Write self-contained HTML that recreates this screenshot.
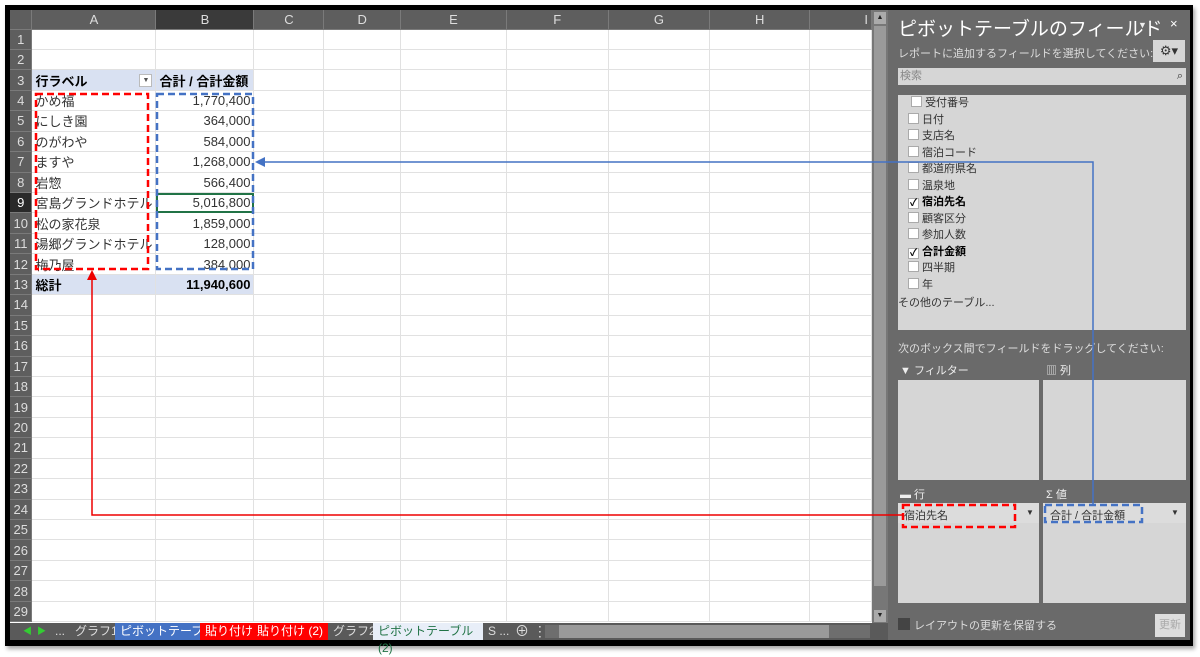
<!DOCTYPE html><html><head><meta charset="utf-8"><style>
*{margin:0;padding:0;box-sizing:border-box}
body{width:1200px;height:650px;background:#fff;position:relative;overflow:hidden;font-family:"Liberation Sans","Noto Sans CJK JP",sans-serif}
.abs{position:absolute}
#frame{left:5px;top:5px;width:1188px;height:641px;background:#000;box-shadow:2px 3px 4px rgba(0,0,0,.35)}
#grid{left:10px;top:10px;width:862px;height:613px;background:#fff;overflow:hidden}
table{border-collapse:collapse;table-layout:fixed;font-size:13px}
td{border-right:1px solid #e1e1e1;border-bottom:1px solid #e1e1e1;height:20.45px;padding:0 3px;white-space:nowrap;overflow:hidden;color:#333}
td.rh{background:#5e5e5e;color:#ddd;text-align:center;border-color:#7a7a7a;font-size:13px;padding:0}
tr.ch td{background:#5e5e5e;color:#ddd;text-align:center;border-color:#7a7a7a;height:19px}
.r{text-align:right}
.hd{background:#d9e1f2;font-weight:bold;color:#000}
#panel{left:888px;top:10px;width:302px;height:630px;background:#6a6a6a;color:#eee}
.lg{background:#d6d6d6}
.it{position:absolute;left:10px;font-size:11px;color:#333;height:16px;line-height:16px}
.cb{display:inline-block;width:11px;height:11px;background:#fff;border:1px solid #aaa;vertical-align:-1px;margin-right:3px;font-size:10px;line-height:9px;text-align:center}
.tab{position:absolute;top:0;height:17px;line-height:17px;font-size:12px;color:#ddd;padding:0 5px}
</style></head><body>
<div id="frame" class="abs"></div>
<div id="grid" class="abs">
<table>
<colgroup><col style="width:22px"><col style="width:123px"><col style="width:98px"><col style="width:70px"><col style="width:77px"><col style="width:106px"><col style="width:102px"><col style="width:102px"><col style="width:100px"><col style="width:62px"></colgroup>
<tr class="ch"><td style="background:#5e5e5e"></td><td>A</td><td style="background:#3a3a3a">B</td><td>C</td><td>D</td><td>E</td><td>F</td><td>G</td><td>H</td><td style="text-align:right">I</td></tr>
<tr><td class="rh">1</td><td></td><td></td><td></td><td></td><td></td><td></td><td></td><td></td><td></td></tr>
<tr><td class="rh">2</td><td></td><td></td><td></td><td></td><td></td><td></td><td></td><td></td><td></td></tr>
<tr><td class="rh">3</td><td class="hd">行ラベル<span style="float:right;background:#fff;border:1px solid #bbb;width:13px;height:13px;margin-top:3px;font-size:7px;text-align:center;line-height:12px;color:#555">▼</span></td><td class="hd">合計 / 合計金額</td><td></td><td></td><td></td><td></td><td></td><td></td><td></td></tr>
<tr><td class="rh">4</td><td>かめ福</td><td class="r">1,770,400</td><td></td><td></td><td></td><td></td><td></td><td></td><td></td></tr>
<tr><td class="rh">5</td><td>にしき園</td><td class="r">364,000</td><td></td><td></td><td></td><td></td><td></td><td></td><td></td></tr>
<tr><td class="rh">6</td><td>のがわや</td><td class="r">584,000</td><td></td><td></td><td></td><td></td><td></td><td></td><td></td></tr>
<tr><td class="rh">7</td><td>ますや</td><td class="r">1,268,000</td><td></td><td></td><td></td><td></td><td></td><td></td><td></td></tr>
<tr><td class="rh">8</td><td>岩惣</td><td class="r">566,400</td><td></td><td></td><td></td><td></td><td></td><td></td><td></td></tr>
<tr><td class="rh" style="background:#2a2a2a;color:#fff">9</td><td>宮島グランドホテル</td><td class="r" style="outline:2px solid #217346;outline-offset:-2px">5,016,800</td><td></td><td></td><td></td><td></td><td></td><td></td><td></td></tr>
<tr><td class="rh">10</td><td>松の家花泉</td><td class="r">1,859,000</td><td></td><td></td><td></td><td></td><td></td><td></td><td></td></tr>
<tr><td class="rh">11</td><td>湯郷グランドホテル</td><td class="r">128,000</td><td></td><td></td><td></td><td></td><td></td><td></td><td></td></tr>
<tr><td class="rh">12</td><td>梅乃屋</td><td class="r">384,000</td><td></td><td></td><td></td><td></td><td></td><td></td><td></td></tr>
<tr><td class="rh">13</td><td class="hd">総計</td><td class="hd r">11,940,600</td><td></td><td></td><td></td><td></td><td></td><td></td><td></td></tr>
<tr><td class="rh">14</td><td></td><td></td><td></td><td></td><td></td><td></td><td></td><td></td><td></td></tr>
<tr><td class="rh">15</td><td></td><td></td><td></td><td></td><td></td><td></td><td></td><td></td><td></td></tr>
<tr><td class="rh">16</td><td></td><td></td><td></td><td></td><td></td><td></td><td></td><td></td><td></td></tr>
<tr><td class="rh">17</td><td></td><td></td><td></td><td></td><td></td><td></td><td></td><td></td><td></td></tr>
<tr><td class="rh">18</td><td></td><td></td><td></td><td></td><td></td><td></td><td></td><td></td><td></td></tr>
<tr><td class="rh">19</td><td></td><td></td><td></td><td></td><td></td><td></td><td></td><td></td><td></td></tr>
<tr><td class="rh">20</td><td></td><td></td><td></td><td></td><td></td><td></td><td></td><td></td><td></td></tr>
<tr><td class="rh">21</td><td></td><td></td><td></td><td></td><td></td><td></td><td></td><td></td><td></td></tr>
<tr><td class="rh">22</td><td></td><td></td><td></td><td></td><td></td><td></td><td></td><td></td><td></td></tr>
<tr><td class="rh">23</td><td></td><td></td><td></td><td></td><td></td><td></td><td></td><td></td><td></td></tr>
<tr><td class="rh">24</td><td></td><td></td><td></td><td></td><td></td><td></td><td></td><td></td><td></td></tr>
<tr><td class="rh">25</td><td></td><td></td><td></td><td></td><td></td><td></td><td></td><td></td><td></td></tr>
<tr><td class="rh">26</td><td></td><td></td><td></td><td></td><td></td><td></td><td></td><td></td><td></td></tr>
<tr><td class="rh">27</td><td></td><td></td><td></td><td></td><td></td><td></td><td></td><td></td><td></td></tr>
<tr><td class="rh">28</td><td></td><td></td><td></td><td></td><td></td><td></td><td></td><td></td><td></td></tr>
<tr><td class="rh">29</td><td></td><td></td><td></td><td></td><td></td><td></td><td></td><td></td><td></td></tr>
</table>
</div>
<!-- vertical scrollbar -->
<div class="abs" style="left:872px;top:10px;width:16px;height:613px;background:#777"></div>
<div class="abs" style="left:874px;top:12px;width:12px;height:12px;background:#aaa;font-size:7px;text-align:center;line-height:12px;color:#222">▲</div>
<div class="abs" style="left:874px;top:26px;width:12px;height:560px;background:#9a9a9a"></div>
<div class="abs" style="left:874px;top:610px;width:12px;height:12px;background:#aaa;font-size:7px;text-align:center;line-height:12px;color:#222">▼</div>
<!-- tab bar -->
<div class="abs" style="left:10px;top:623px;width:878px;height:17px;background:#5a5a5a">
<span class="tab" style="left:8px;color:#3c3;font-size:9px">◀ &nbsp;▶</span>
<span class="tab" style="left:40px">...</span>
<span class="tab" style="left:60px">グラフ1</span>
<span class="tab" style="left:105px;background:#4472c4;color:#fff">ピボットテーブル</span>
<span class="tab" style="left:190px;background:#f00;color:#fff">貼り付け</span>
<span class="tab" style="left:242px;background:#f00;color:#fff">貼り付け (2)</span>
<span class="tab" style="left:318px">グラフ2</span>
<span class="tab" style="left:363px;background:#e8eef8;color:#217346;width:110px">ピボットテーブル (2)</span>
<span class="tab" style="left:473px">S ...</span>
<span class="tab" style="left:500px;font-size:14px">⊕ ⋮</span>
<div class="abs" style="left:535px;top:2px;width:325px;height:13px;background:#6e6e6e"></div>
<div class="abs" style="left:549px;top:2px;width:270px;height:13px;background:#9a9a9a"></div>
</div>
<!-- panel -->
<div id="panel" class="abs">
<div class="abs" style="left:10px;top:4px;font-size:19px;color:#fff">ピボットテーブルのフィールド</div>
<div class="abs" style="left:250px;top:10px;font-size:9px">▼</div>
<div class="abs" style="left:282px;top:6px;font-size:13px;color:#fff">×</div>
<div class="abs" style="left:10px;top:35px;font-size:11px;color:#ddd">レポートに追加するフィールドを選択してください:</div>
<div class="abs lg" style="left:265px;top:30px;width:32px;height:22px;font-size:13px;color:#333;text-align:center;line-height:22px">⚙▾</div>
<div class="abs lg" style="left:10px;top:58px;width:288px;height:17px;font-size:11px;color:#888;padding-left:2px;line-height:17px">検索<span style="float:right;color:#333;margin-right:3px">⌕</span></div>
<div class="abs lg" style="left:10px;top:85px;width:288px;height:235px">
<div class="it" style="top:0">&nbsp;<span class="cb"></span>受付番号</div>
<div class="it" style="top:16.5px"><span class="cb"></span>日付</div>
<div class="it" style="top:33px"><span class="cb"></span>支店名</div>
<div class="it" style="top:49.5px"><span class="cb"></span>宿泊コード</div>
<div class="it" style="top:66px"><span class="cb"></span>都道府県名</div>
<div class="it" style="top:82.5px"><span class="cb"></span>温泉地</div>
<div class="it" style="top:99px;font-weight:bold;color:#000"><span class="cb">✓</span>宿泊先名</div>
<div class="it" style="top:115.5px"><span class="cb"></span>顧客区分</div>
<div class="it" style="top:132px"><span class="cb"></span>参加人数</div>
<div class="it" style="top:148.5px;font-weight:bold;color:#000"><span class="cb">✓</span>合計金額</div>
<div class="it" style="top:165px"><span class="cb"></span>四半期</div>
<div class="it" style="top:181.5px"><span class="cb"></span>年</div>
<div class="it" style="top:200px;left:0">その他のテーブル...</div>
</div>
<div class="abs" style="left:10px;top:330px;font-size:11px;color:#ddd">次のボックス間でフィールドをドラッグしてください:</div>
<div class="abs" style="left:12px;top:352px;font-size:11px">▼ フィルター</div>
<div class="abs" style="left:158px;top:352px;font-size:11px">▥ 列</div>
<div class="abs lg" style="left:10px;top:370px;width:141px;height:100px"></div>
<div class="abs lg" style="left:155px;top:370px;width:143px;height:100px"></div>
<div class="abs" style="left:12px;top:476px;font-size:11px">▬ 行</div>
<div class="abs" style="left:158px;top:476px;font-size:11px">Σ 値</div>
<div class="abs lg" style="left:10px;top:493px;width:141px;height:100px;border-top:20px solid #dcdcdc"></div>
<div class="abs lg" style="left:155px;top:493px;width:143px;height:100px;border-top:20px solid #dcdcdc"></div>
<div class="abs" style="left:16px;top:497px;font-size:11px;color:#333">宿泊先名</div>
<div class="abs" style="left:138px;top:498px;font-size:8px;color:#333">▼</div>
<div class="abs" style="left:162px;top:497px;font-size:11px;color:#333">合計 / 合計金額</div>
<div class="abs" style="left:283px;top:498px;font-size:8px;color:#333">▼</div>
<div class="abs" style="left:10px;top:608px;width:12px;height:12px;background:#444"></div>
<div class="abs" style="left:26px;top:607px;font-size:11px;color:#ddd">レイアウトの更新を保留する</div>
<div class="abs" style="left:267px;top:604px;width:30px;height:23px;background:#ddd;color:#aaa;font-size:11px;text-align:center;line-height:23px">更新</div>
</div>
<!-- annotations -->
<svg class="abs" style="left:0;top:0" width="1200" height="650">
<g fill="none" stroke-width="2.5" stroke-dasharray="7,4">
<rect x="36" y="94" width="112" height="175" stroke="#f00"/>
<rect x="157" y="94" width="96" height="175" stroke="#4472c4"/>
<rect x="903" y="505" width="112" height="22" stroke="#f00"/>
<rect x="1045" y="505" width="97" height="17" stroke="#4472c4"/>
</g>
<g fill="none" stroke-width="1.5">
<polyline points="903,515 92,515 92,278" stroke="#e00"/>
<polyline points="1093,505 1093,162 262,162" stroke="#4472c4"/>
</g>
<polygon points="92,270 87,280 97,280" fill="#e00"/>
<polygon points="255,162 265,157 265,167" fill="#4472c4"/>
</svg>
</body></html>
